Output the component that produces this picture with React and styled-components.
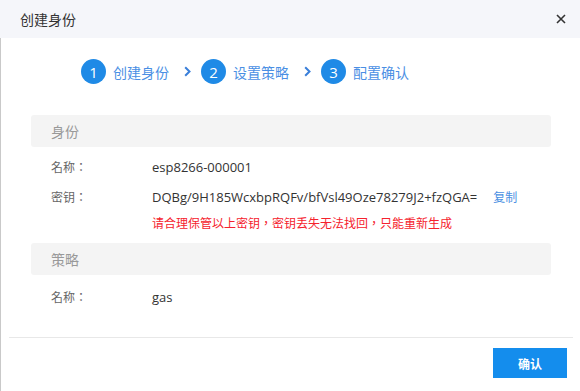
import React from "react";
import styled, { createGlobalStyle } from "styled-components";

const Global = createGlobalStyle`
  html, body { margin: 0; padding: 0; background: #fff; }
  body { font-family: "Open Sans", "Noto Sans CJK SC", sans-serif; }
`;

const Dialog = styled.div`
  width: 580px;
  height: 391px;
  display: flex;
  flex-direction: column;
  background: #fff;
  overflow: hidden;
`;

const Header = styled.div`
  height: 38px;
  flex-shrink: 0;
  display: flex;
  align-items: center;
  justify-content: space-between;
  padding: 0 14px 0 20px;
  background: #f5f6fa;
  font-size: 14px;
  color: #333;
  font-family: "Noto Sans CJK SC", sans-serif;
`;

const Close = styled.span`
  display: flex;
  width: 10px;
  height: 10px;
  cursor: pointer;
`;

const Body = styled.div`
  flex: 1;
  display: flex;
  flex-direction: column;
  border-left: 1px solid #c9c9c9;
`;

const Steps = styled.div`
  display: flex;
  align-items: center;
  padding: 21px 0 0 80px;
  height: 25px;
`;

const Step = styled.div`
  display: flex;
  align-items: center;
  gap: 7px;
`;

const Circle = styled.span`
  width: 25px;
  height: 25px;
  border-radius: 50%;
  background: #1f8ae6;
  color: #fff;
  display: flex;
  align-items: center;
  justify-content: center;
  font-size: 15px;
  font-family: "Open Sans", sans-serif;
`;

const StepText = styled.span`
  font-size: 14px;
  color: #4a8fe4;
  font-family: "Noto Sans CJK SC", sans-serif;
`;

const Arrow = styled.span`
  display: flex;
  margin: 0 10px 0 15px;
`;

const Content = styled.div`
  padding: 31px 22px 30px;
  margin: 0 7px 0 8px;
  border-bottom: 1px solid #e8e8e8;
`;

const SectionHead = styled.div`
  height: 32px;
  display: flex;
  align-items: center;
  padding-left: 20px;
  background: #f4f4f4;
  border-radius: 3px;
  font-size: 14px;
  color: #999;
  font-family: "Noto Sans CJK SC", sans-serif;
  margin-top: ${(p) => (p.$gap ? "10px" : "0")};
`;

const Row = styled.div`
  display: flex;
  align-items: flex-start;
  margin-top: ${(p) => p.$top || "10px"};
  padding-left: 20px;
`;

const Label = styled.span`
  width: 101px;
  flex-shrink: 0;
  line-height: 20px;
  font-size: 12px;
  color: #666;
  font-family: "Noto Sans CJK TC", sans-serif;
`;

const Value = styled.div`
  display: flex;
  flex-direction: column;
  gap: 6px;
`;

const Line = styled.div`
  display: flex;
  align-items: center;
  gap: 16px;
  line-height: 20px;
  font-size: 13px;
  color: #333;
`;

const Link = styled.a`
  font-size: 12px;
  color: #4a90e2;
  font-family: "Noto Sans CJK SC", sans-serif;
  cursor: pointer;
`;

const Warn = styled.div`
  line-height: 20px;
  font-size: 12px;
  color: #f5222d;
  font-family: "Noto Sans CJK TC", sans-serif;
`;

const Footer = styled.div`
  display: flex;
  justify-content: flex-end;
  padding: 10px 13px 0 0;
`;

const Button = styled.button`
  width: 74px;
  height: 30px;
  border: 0;
  background: #148ded;
  color: #fff;
  font-size: 12px;
  font-weight: 700;
  font-family: "Noto Sans CJK SC", sans-serif;
  cursor: pointer;
`;

const Chevron = () => (
  <svg width="7" height="11" viewBox="0 0 7 11">
    <path d="M1.2 1.2 L5.5 5.5 L1.2 9.8" fill="none" stroke="#3a7fd9" strokeWidth="2" />
  </svg>
);

const steps = ["创建身份", "设置策略", "配置确认"];

export default function App() {
  return (
    <Dialog>
      <Global />
      <Header>
        <span>创建身份</span>
        <Close>
          <svg width="10" height="10" viewBox="0 0 10 10">
            <path d="M1 1 L9 9 M9 1 L1 9" stroke="#333" strokeWidth="1.6" />
          </svg>
        </Close>
      </Header>
      <Body>
        <Steps>
          {steps.map((s, i) => (
            <React.Fragment key={s}>
              <Step>
                <Circle>{i + 1}</Circle>
                <StepText>{s}</StepText>
              </Step>
              {i < steps.length - 1 && (
                <Arrow>
                  <Chevron />
                </Arrow>
              )}
            </React.Fragment>
          ))}
        </Steps>
        <Content>
          <SectionHead>身份</SectionHead>
          <Row>
            <Label>名称：</Label>
            <Value>
              <Line>esp8266-000001</Line>
            </Value>
          </Row>
          <Row>
            <Label>密钥：</Label>
            <Value>
              <Line>
                <span>DQBg/9H185WcxbpRQFv/bfVsl49Oze78279J2+fzQGA=</span>
                <Link>复制</Link>
              </Line>
              <Warn>请合理保管以上密钥，密钥丢失无法找回，只能重新生成</Warn>
            </Value>
          </Row>
          <SectionHead $gap>策略</SectionHead>
          <Row $top="12px">
            <Label>名称：</Label>
            <Value>
              <Line>gas</Line>
            </Value>
          </Row>
        </Content>
        <Footer>
          <Button>确认</Button>
        </Footer>
      </Body>
    </Dialog>
  );
}
